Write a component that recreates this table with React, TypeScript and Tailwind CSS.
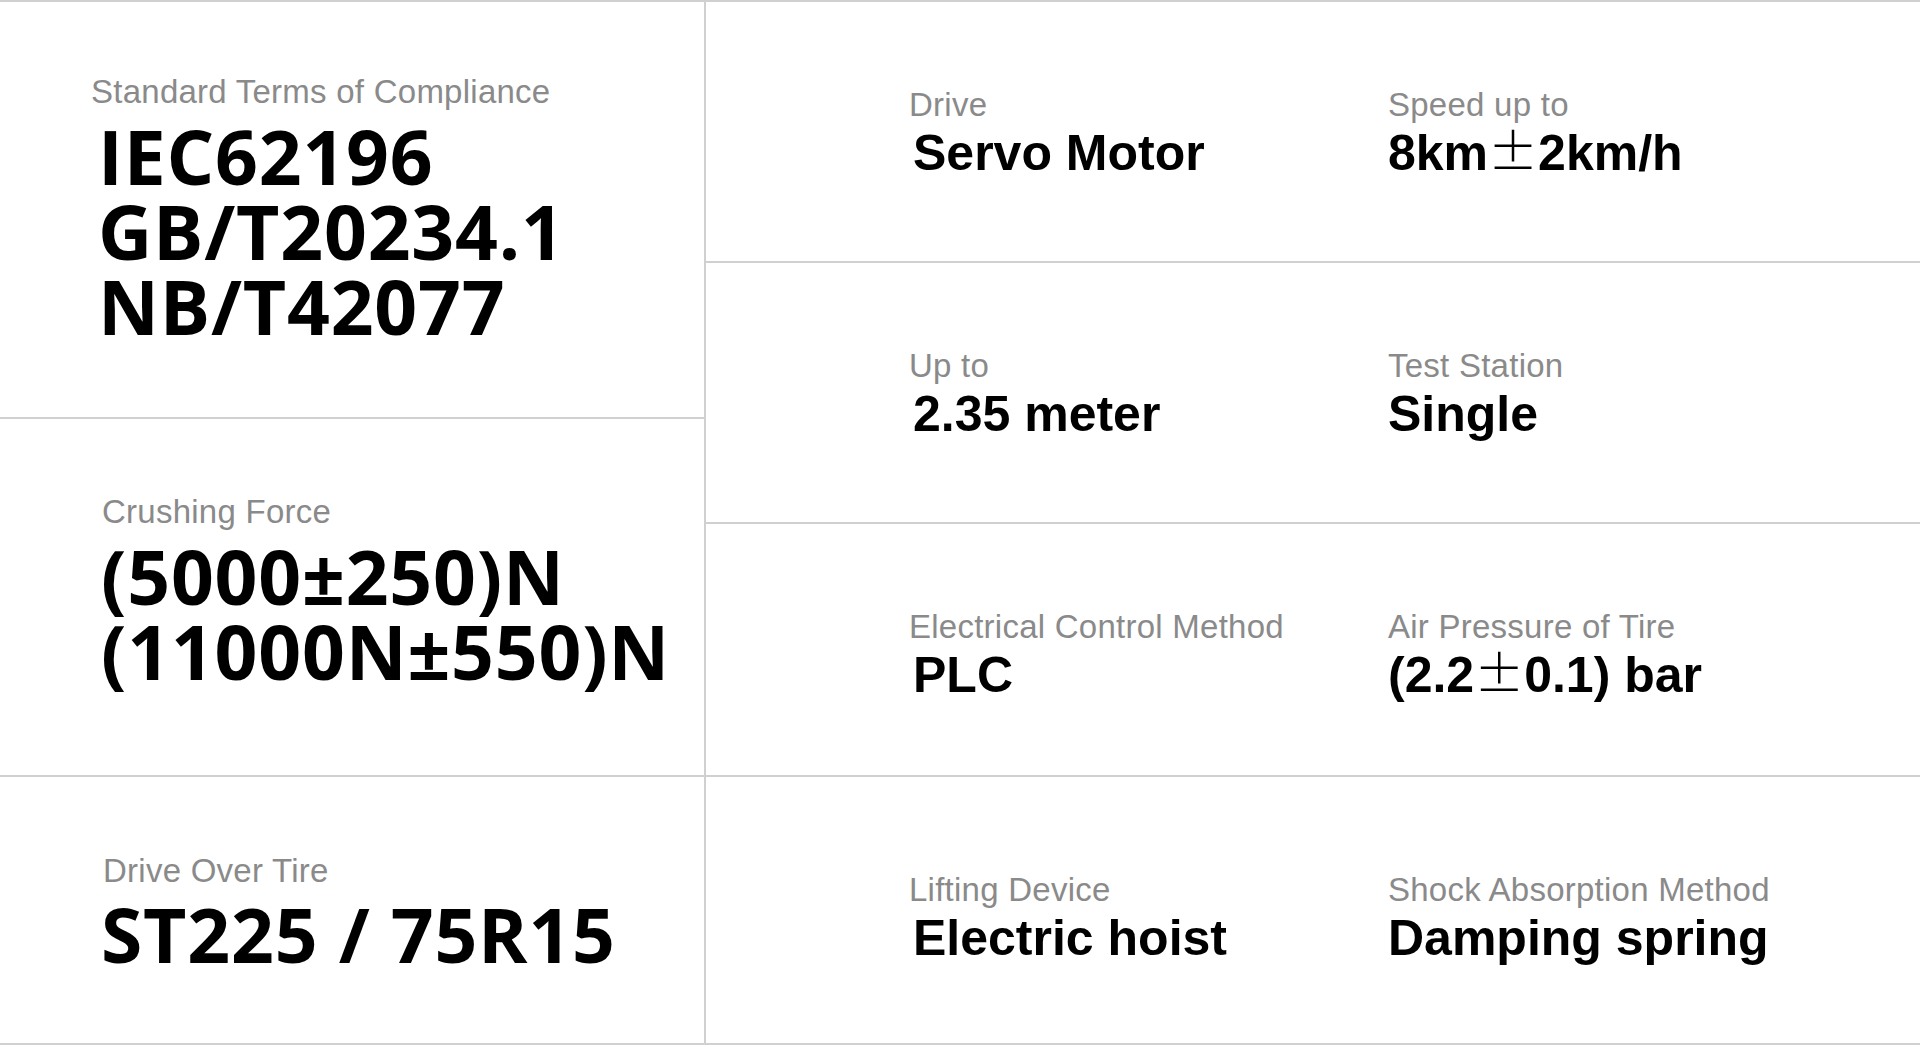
const specs = [
  [
    { label: "Drive", value: "Servo Motor" },
    { label: "Speed up to", value: ["8km", "2km/h"] },
  ],
  [
    { label: "Up to", value: "2.35 meter" },
    { label: "Test Station", value: "Single" },
  ],
  [
    { label: "Electrical Control Method", value: "PLC" },
    { label: "Air Pressure of Tire", value: ["(2.2", "0.1) bar"] },
  ],
  [
    { label: "Lifting Device", value: "Electric hoist" },
    { label: "Shock Absorption Method", value: "Damping spring" },
  ],
];

const rowStyles = [
  "h-[261px] pt-[84px] border-b-2",
  "h-[261px] pt-[84px] border-b-2",
  "h-[253px] pt-[84px] border-b-2",
  "flex-1 pt-[94px]",
];

function Label({ children, className = "" }: { children: React.ReactNode; className?: string }) {
  return (
    <div
      className={`font-['Liberation_Sans',Arial,sans-serif] text-[33px] leading-[38px] tracking-[0.25px] text-[#8a8a8a] whitespace-nowrap ${className}`}
    >
      {children}
    </div>
  );
}

function Value({ value, className = "" }: { value: string | string[]; className?: string }) {
  return (
    <div
      className={`mt-[4px] h-[50px] font-['Liberation_Sans',Arial,sans-serif] text-[50px] font-bold leading-[50px] text-black whitespace-nowrap ${className}`}
    >
      {Array.isArray(value) ? (
        <>
          {value[0]}
          <span className="font-['Noto_Sans_CJK_SC',sans-serif] font-light leading-[0]">±</span>
          {value[1]}
        </>
      ) : (
        value
      )}
    </div>
  );
}

const bigText =
  "font-['Open_Sans',sans-serif] text-[75px] font-bold leading-[75px] tracking-[0.8px] text-black whitespace-nowrap";

export default function App() {
  return (
    <div className="flex h-[1045px] w-full border-y-2 border-[#d0d0d0] bg-white">
      {/* left column */}
      <div className="flex w-[706px] shrink-0 flex-col border-r-2 border-[#d0d0d0]">
        <div className="h-[417px] border-b-2 border-[#d0d0d0] pl-[91px] pt-[71px]">
          <Label>Standard Terms of Compliance</Label>
          <div className={`mt-[8px] ml-[7px] ${bigText}`}>
            <div>IEC62196</div>
            <div>GB/T20234.1</div>
            <div>NB/T42077</div>
          </div>
        </div>
        <div className="h-[358px] border-b-2 border-[#d0d0d0] pl-[96px] pt-[74px]">
          <Label className="ml-[6px]">Crushing Force</Label>
          <div className={`mt-[8px] ml-[5px] ${bigText}`}>
            <div>(5000±250)N</div>
            <div>(11000N±550)N</div>
          </div>
        </div>
        <div className="flex-1 pl-[96px] pt-[75px]">
          <Label className="ml-[7px]">Drive Over Tire</Label>
          <div className={`mt-[7px] ml-[5px] ${bigText}`}>ST225 / 75R15</div>
        </div>
      </div>

      {/* right grid */}
      <div className="flex flex-1 flex-col">
        {specs.map((row, i) => (
          <div key={i} className={`flex border-[#d0d0d0] pl-[203px] ${rowStyles[i]}`}>
            <div className="w-[479px]">
              <Label>{row[0].label}</Label>
              <Value value={row[0].value} className="ml-[4px]" />
            </div>
            <div>
              <Label>{row[1].label}</Label>
              <Value value={row[1].value} />
            </div>
          </div>
        ))}
      </div>
    </div>
  );
}
